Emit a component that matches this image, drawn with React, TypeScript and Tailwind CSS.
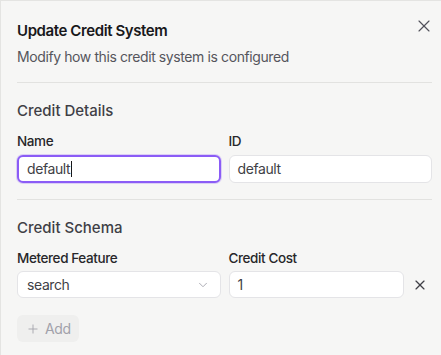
import React from 'react';
import { X, ChevronDown, Plus } from 'lucide-react';

export default function App() {
  return (
    <div
      className="h-[355px] w-[441px] overflow-hidden border-l border-t border-[#e4e4e2] bg-[#f6f6f5] pl-4 pr-[9px] tracking-tight"
      style={{ fontFamily: 'Inter, "Noto Sans", sans-serif' }}
    >
      <div className="relative pt-[18px]">
        <h2 className="text-[15px] font-semibold leading-6 text-[#18181b]">Update Credit System</h2>
        <p className="mt-[4px] text-sm leading-5 text-[#55555c]">Modify how this credit system is configured</p>
        <button className="absolute right-[-2px] top-[15px] flex h-5 w-5 items-center justify-center text-[#52525b]">
          <X size={20} strokeWidth={1.4} />
        </button>
      </div>

      <div className="mt-[15px] h-px bg-[#e2e2e0]" />

      <div className="pt-[18px]">
        <h3 className="text-[15px] font-medium leading-5 tracking-normal text-[#3f3f46]">Credit Details</h3>
        <div className="mt-[10px] grid grid-cols-2 gap-2">
          <div>
            <label className="block text-[13.5px] font-medium leading-5 text-[#27272a]">Name</label>
            <div className="mt-[4px] flex h-7 items-center rounded-md border-2 border-[#8b5cf6] bg-white px-2 text-sm text-[#3f3f46] shadow-[0_0_0_1px_rgba(139,92,246,0.25)]">
              default<span className="ml-px h-4 w-px bg-[#18181b]" />
            </div>
          </div>
          <div>
            <label className="block text-[13.5px] font-medium leading-5 text-[#27272a]">ID</label>
            <div className="mt-[4px] flex h-7 items-center rounded-md border border-[#e4e4e7] bg-white px-[8px] text-sm text-[#3f3f46]">
              default
            </div>
          </div>
        </div>
      </div>

      <div className="mt-[16px] h-px bg-[#e2e2e0]" />

      <div className="pt-[18px]">
        <h3 className="text-[15px] font-medium leading-5 tracking-normal text-[#3f3f46]">Credit Schema</h3>
        <div className="mt-[10px] grid grid-cols-2 gap-2">
          <label className="block text-[13.5px] font-medium leading-5 text-[#27272a]">Metered Feature</label>
          <label className="block text-[13.5px] font-medium leading-5 text-[#27272a]">Credit Cost</label>
        </div>
        <div className="mt-[3px] grid grid-cols-2 gap-2">
          <div className="flex h-[27px] items-center justify-between rounded-md border border-[#e4e4e7] bg-white pl-[9px] pr-[10px] text-sm text-[#3f3f46]">
            search
            <ChevronDown size={14} strokeWidth={1.5} className="text-[#a1a1aa]" />
          </div>
          <div className="flex items-center gap-[4px]">
            <div className="flex h-[27px] flex-1 items-center rounded-md border border-[#e4e4e7] bg-white px-[8px] text-sm text-[#3f3f46]">
              1
            </div>
            <button className="flex h-6 w-6 items-center justify-center text-[#3f3f46]">
              <X size={16} strokeWidth={1.75} />
            </button>
          </div>
        </div>
        <button
          disabled
          className="mt-[17px] flex h-[27px] items-center gap-[5px] rounded-md bg-[#efefee] pl-[9px] pr-[8px] text-sm text-[#a1a1aa]"
        >
          <Plus size={14} strokeWidth={1.5} />
          Add
        </button>
      </div>
    </div>
  );
}
